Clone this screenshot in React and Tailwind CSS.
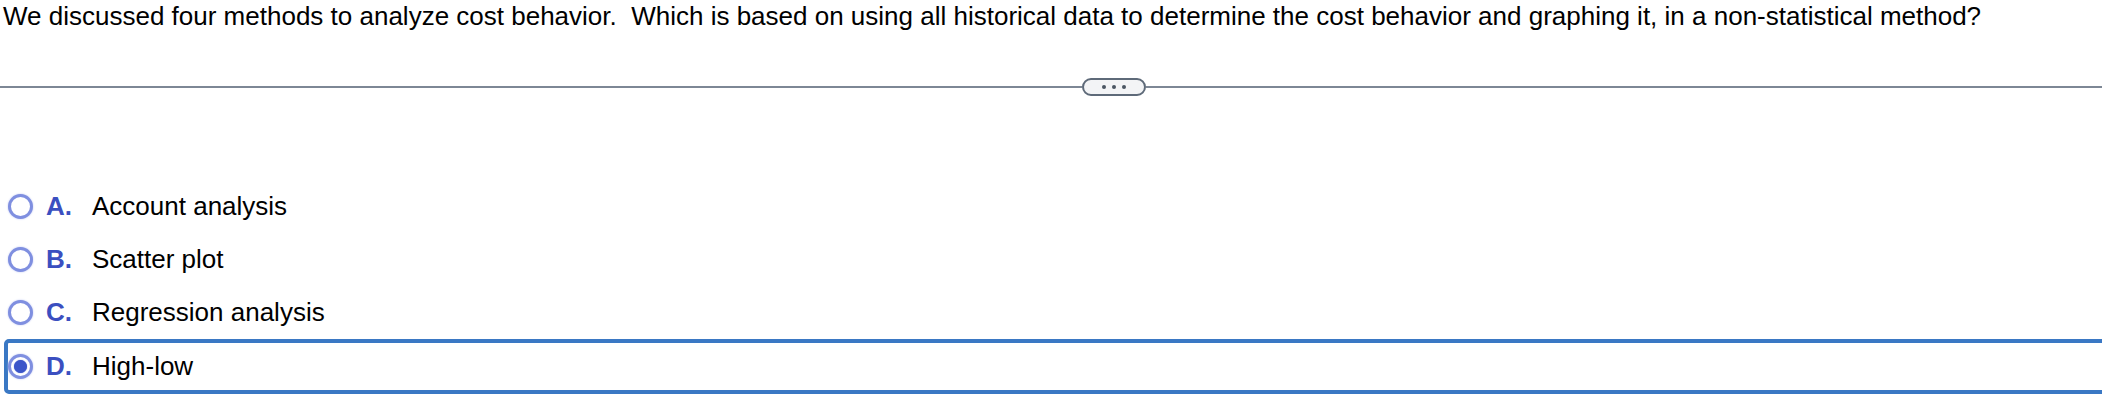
import React from "react";

const options = [
  { key: "A", text: "Account analysis" },
  { key: "B", text: "Scatter plot" },
  { key: "C", text: "Regression analysis" },
  { key: "D", text: "High-low", selected: true },
];

function Radio({ selected }) {
  return (
    <span className="relative flex h-[25px] w-[25px] shrink-0 items-center justify-center rounded-full border-[3px] border-[#7f8fe0] bg-white shadow-[0_0_2px_#b9c2f0]">
      {selected && <span className="h-[13px] w-[13px] rounded-full bg-[#3b55c9] shadow-[0_0_1px_#3b55c9]" />}
    </span>
  );
}

export default function App() {
  return (
    <div className="h-[420px] w-full overflow-hidden bg-white font-['Liberation_Sans',Arial,sans-serif] text-black">
      <p className="pl-[3px] pt-[1px] text-[26px] leading-[30px]">
        We discussed four methods to analyze cost behavior.&nbsp; Which is based on using all historical data to determine the cost behavior and graphing it, in a non-statistical method?
      </p>
      <div className="mt-[47px] flex items-center">
        <div className="h-[2px] w-[1082px] bg-[#7d8795]" />
        <div className="flex h-[18px] w-[64px] items-center justify-center gap-[6px] rounded-full border-2 border-[#5e6a79] bg-[#f3f4f6]">
          <span className="h-[4px] w-[4px] rounded-full bg-[#4b5563]" />
          <span className="h-[4px] w-[4px] rounded-full bg-[#4b5563]" />
          <span className="h-[4px] w-[4px] rounded-full bg-[#4b5563]" />
        </div>
        <div className="h-[2px] flex-1 bg-[#7d8795]" />
      </div>
      <div className="mt-[84px] flex flex-col">
        {options.map((o) => (
          <div
            key={o.key}
            className={
              o.selected
                ? "ml-[4px] mr-[-20px] flex h-[55px] items-center rounded-[5px] border-[4px] border-[#3a78c4] pl-[0px]"
                : "flex h-[53px] items-center pl-[8px]"
            }
          >
            <Radio selected={o.selected} />
            <span className="ml-[13px] w-[46px] text-[26px] font-bold text-[#3b4fc0]">{o.key}.</span>
            <span className="text-[26px]">{o.text}</span>
          </div>
        ))}
      </div>
    </div>
  );
}
